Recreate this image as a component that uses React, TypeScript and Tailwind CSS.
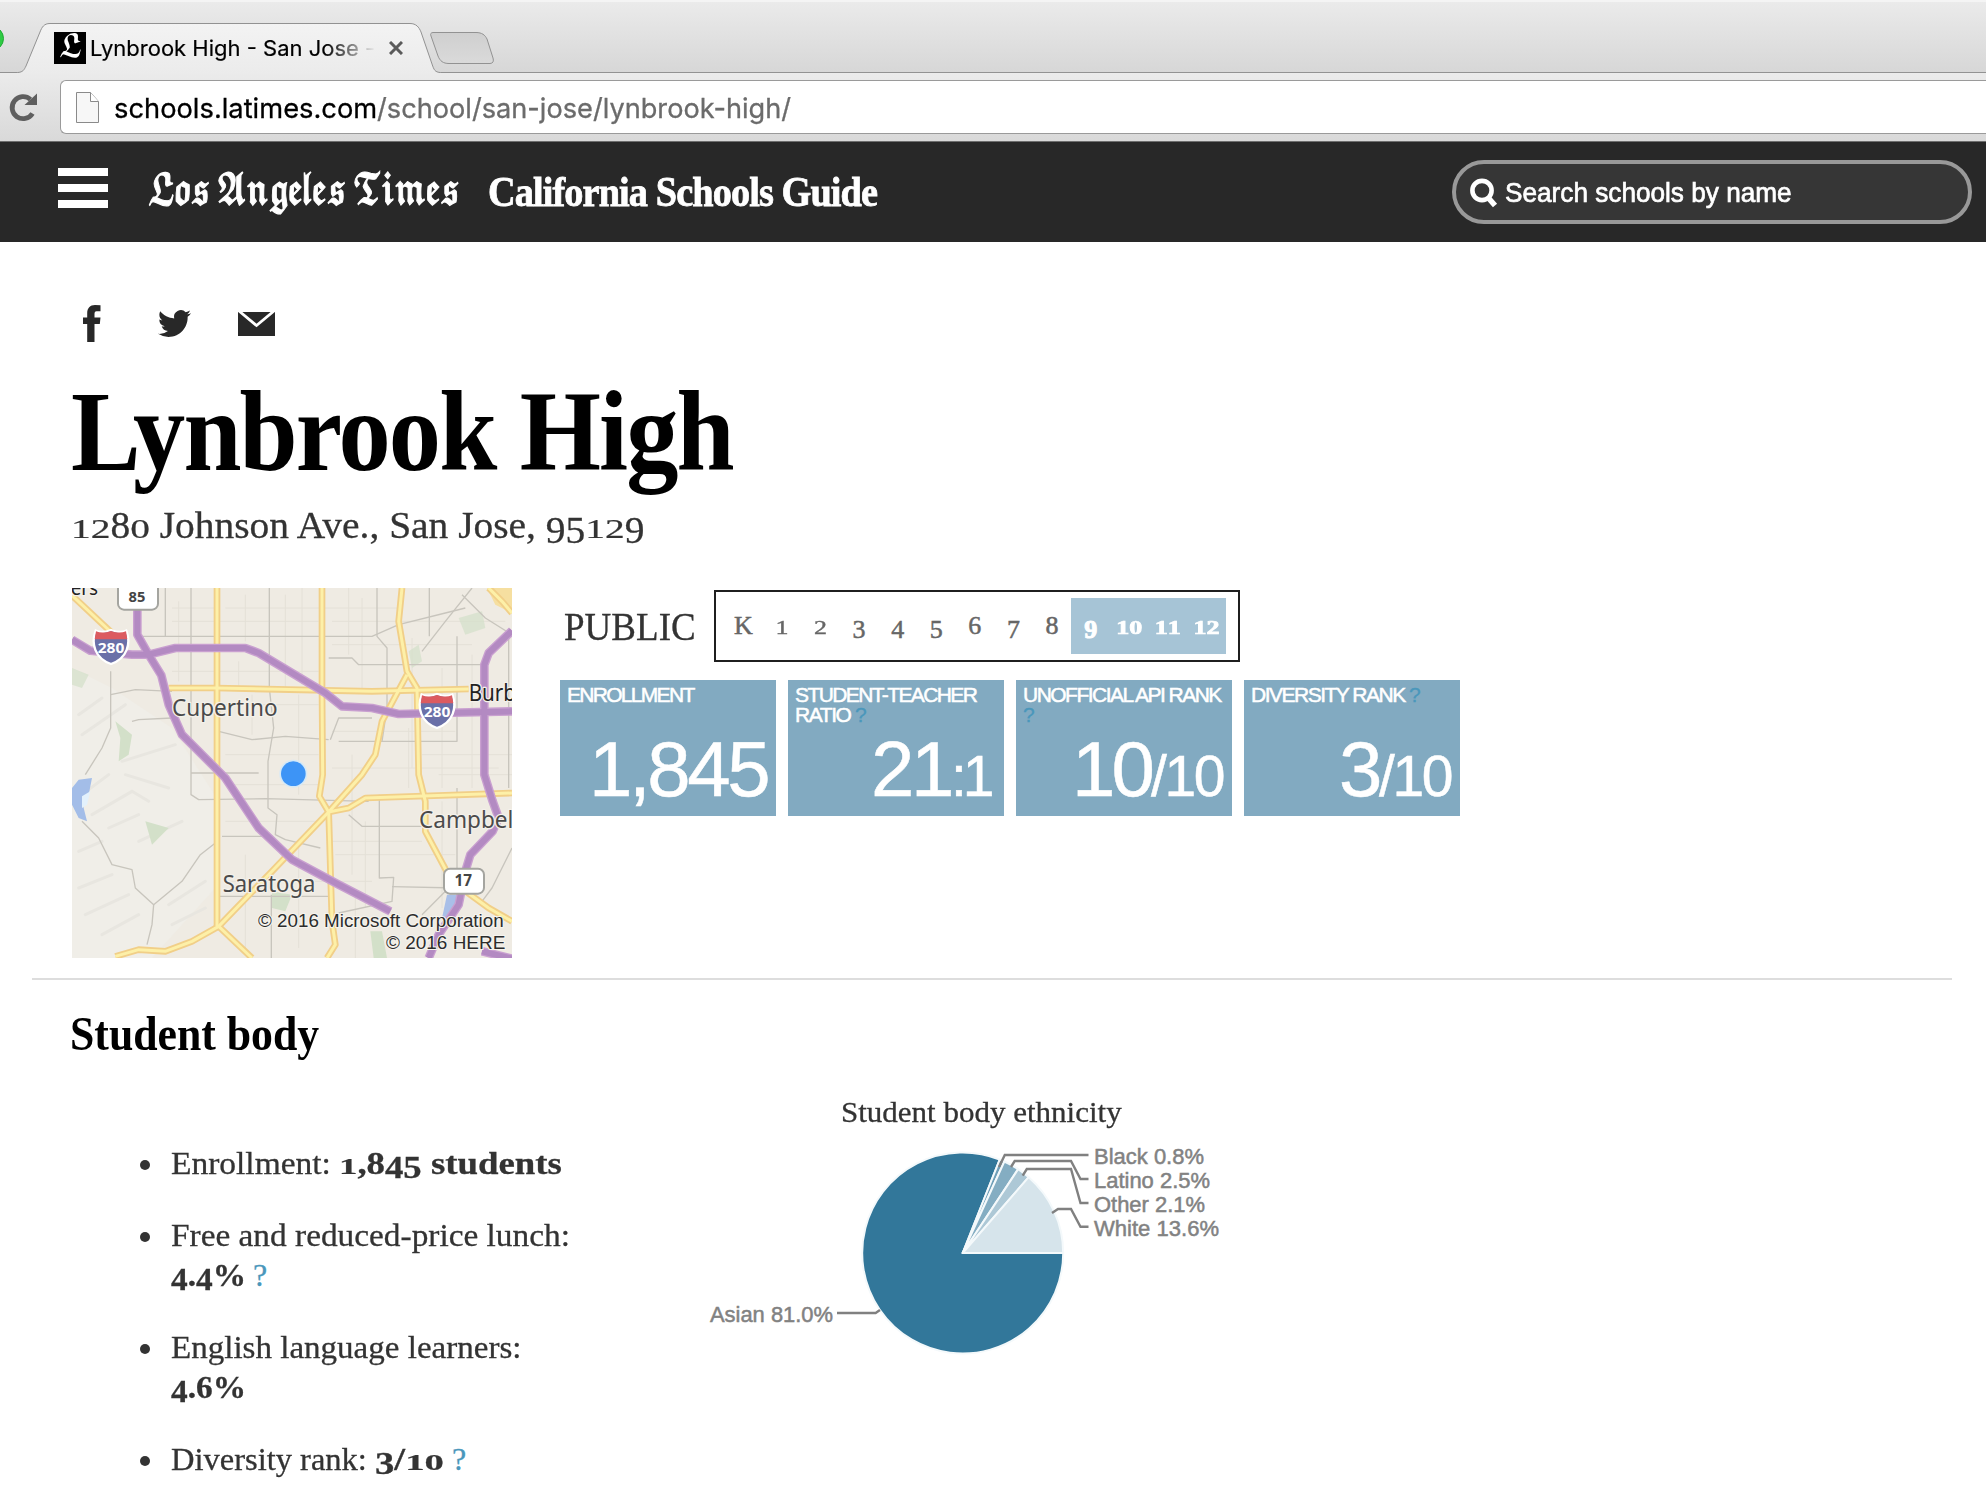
import { useLayoutEffect, useRef, useState, type ReactNode } from "react";

const SERIF = "font-['Liberation_Serif',serif]";
const SANS = "font-['Liberation_Sans',sans-serif]";

/* Sets one line of text to the width of its box, by scaling or by tracking. */
function Fit({ children, className = "", tracking = false }: { children: ReactNode; className?: string; tracking?: boolean }) {
  const box = useRef<HTMLSpanElement>(null);
  const line = useRef<HTMLSpanElement>(null);
  const [style, setStyle] = useState<Record<string, string>>({});
  useLayoutEffect(() => {
    if (!box.current || !line.current) return;
    const target = box.current.getBoundingClientRect().width;
    const natural = line.current.offsetWidth;
    const count = (line.current.textContent || "").length;
    setStyle(
      tracking
        ? { letterSpacing: `${(target - natural) / count}px` }
        : { transform: `scaleX(${target / natural})` }
    );
  }, [tracking]);
  return (
    <span ref={box} className={`inline-block whitespace-nowrap ${className}`}>
      <span ref={line} className="inline-block origin-left" style={style}>
        {children}
      </span>
    </span>
  );
}

/* Old-style figures: 0, 1 and 2 at x-height; 3, 4, 5, 7 and 9 below the baseline. */
function Figures({ children }: { children: string }) {
  return (
    <>
      {children.split("").map((c, i) => {
        if ("012".includes(c))
          return (
            <span key={i} className="inline-block origin-[50%_83.75%] scale-y-[0.72] leading-none">
              {c}
            </span>
          );
        if ("34579".includes(c))
          return (
            <span key={i} className="align-[-0.14em] leading-none">
              {c}
            </span>
          );
        return c;
      })}
    </>
  );
}

function BrowserChrome() {
  return (
    <div className="h-[142px] border-b border-[#6e6e6e] bg-[#e4e4e4] font-[Inter,sans-serif]">
      <div className="relative flex h-[73px] border-b border-[#929292] bg-linear-to-b from-[#ebebeb] to-[#d7d7d7]">
        <div className="absolute top-0 h-[2px] w-full bg-[#f4f4f4]" />
        <div className="absolute -left-[21px] top-[26px] h-[25px] w-[25px] rounded-full border border-[#1faa32] bg-[#2fcb44]" />
        <svg className="absolute left-0 top-0" width="510" height="74" viewBox="0 0 510 74" fill="none">
          <defs>
            <linearGradient id="tab" x1="0" y1="0" x2="0" y2="1">
              <stop offset="0" stopColor="#f3f3f3" />
              <stop offset="1" stopColor="#ebebeb" />
            </linearGradient>
            <linearGradient id="plus" x1="0" y1="0" x2="0" y2="1">
              <stop offset="0" stopColor="#cfcfcf" />
              <stop offset="1" stopColor="#dadada" />
            </linearGradient>
          </defs>
          <path
            d="M16 74 L18 72.5 C23 72 24 70 26 66 L40 32 C42 27 44 23.500 50 23.500 H410 C416 23.500 419 27 421 32 L432 64 C434 70 435 72 440 72.500 L442 74 Z"
            fill="url(#tab)"
          />
          <path
            d="M18 72.500 C23 72 24 70 26 66 L40 32 C42 27 44 23.500 50 23.500 H410 C416 23.500 419 27 421 32 L432 64 C434 70 435 72 440 72.500"
            stroke="#929292"
          />
          <path
            d="M433 32.500 H476 C482 32.500 485 35 487 39 L493 58 C494 61 493 63.500 490 63.500 H449 C443 63.500 440 61 438 56 L431 36 C430 34 431 32.500 433 32.500 Z"
            fill="url(#plus)"
            stroke="#929292"
          />
        </svg>
        <div className="relative ml-[54px] mt-8 flex h-8">
          <div className="flex size-8 items-center justify-center bg-black text-[29px] leading-none text-white font-['DejaVu_Math_TeX_Gyre','DejaVu_Sans',serif]">
            <span className="scale-x-[0.85]">𝕷</span>
          </div>
          <div className="ml-1 w-[286px] overflow-hidden text-[22px] leading-8 text-black [-webkit-text-stroke:0.2px_black] [mask-image:linear-gradient(to_right,black_82%,transparent_100%)]">
            <Fit className="w-[285px]">Lynbrook High - San Jose -</Fit>
          </div>
          <svg className="ml-[13px] mt-[9px]" width="14" height="14" viewBox="0 0 14 14" stroke="#5a5a5a" strokeWidth="3">
            <path d="M1 1 L13 13 M13 1 L1 13" />
          </svg>
        </div>
      </div>
      <div className="flex h-[68px] bg-linear-to-b from-[#ebebeb] to-[#d9d9d9]">
        <svg className="ml-[9px] mt-[19px]" width="30" height="30" viewBox="0 0 30 30" fill="none">
          <path d="M23.500 21.500 A11 11 0 1 1 21.500 7.500" stroke="#5f5f5f" strokeWidth="4.800" />
          <path d="M28 1.500 V13 H15.500 Z" fill="#5f5f5f" />
        </svg>
        <div className="ml-[21px] mt-[7px] flex h-[54px] flex-1 rounded-l-[6px] border border-r-0 border-[#9a9a9a] bg-white">
          <svg className="ml-[15px] mt-[11px]" width="23" height="31" viewBox="0 0 23 31" fill="#f7f7f7" stroke="#8a8a8a">
            <path d="M.5 .5 H14.500 L22.500 9.500 V30.500 H.5 Z" />
            <path d="M14.500 .5 V9.500 H22.500" fill="#fff" />
          </svg>
          <div className="ml-[15px] flex text-[27.500px] leading-[55px]">
            <Fit className="w-[263px] text-black [-webkit-text-stroke:0.3px_black]">schools.latimes.com</Fit>
            <Fit className="w-[414px] text-[#6b6b6b] [-webkit-text-stroke:0.3px_#6b6b6b]">/school/san-jose/lynbrook-high/</Fit>
          </div>
        </div>
      </div>
    </div>
  );
}

function SiteHeader() {
  return (
    <header className="flex h-[100px] bg-[#282828] text-white">
      <div className="ml-[58px] mt-[26px] flex h-10 w-[50px] flex-col justify-between">
        <div className="h-2 bg-white" />
        <div className="h-2 bg-white" />
        <div className="h-2 bg-white" />
      </div>
      <Fit className="ml-[39px] mt-[21px] w-[312px] text-[41px] leading-[60px] tracking-[-2.500px] [-webkit-text-stroke:1.2px_white] font-['DejaVu_Math_TeX_Gyre','DejaVu_Sans',serif]">
        𝕷𝖔𝖘 𝕬𝖓𝖌𝖊𝖑𝖊𝖘 𝕿𝖎𝖒𝖊𝖘
      </Fit>
      <Fit className={`ml-[29px] mt-5 w-[389px] text-[43px] font-bold leading-[60px] tracking-[-1px] [-webkit-text-stroke:0.8px_white] ${SERIF}`}>
        California Schools Guide
      </Fit>
      <div className="ml-auto mr-[14px] mt-[18px] flex h-16 w-[520px] items-center rounded-full border-4 border-[#999] bg-[#363636]">
        <svg className="ml-[14px] mt-px" width="28" height="30" viewBox="0 0 28 30" fill="none" stroke="#fff">
          <circle cx="12" cy="12.500" r="9.600" strokeWidth="4.600" />
          <path d="M18 19.500 L25 27.500" strokeWidth="5.500" />
        </svg>
        <Fit className={`ml-[7px] mt-[2px] w-[287px] text-[28px] leading-[50px] [-webkit-text-stroke:0.7px_white] ${SANS}`}>
          Search schools by name
        </Fit>
      </div>
    </header>
  );
}

function ShareIcons() {
  return (
    <div className="flex h-[37px] items-center text-[#282828]">
      <svg className="ml-[11px]" width="18" height="37" viewBox="0 0 18 37" fill="currentColor">
        <path d="M17.500 .2 V6.200 H13.500 C12 6.200 11.500 7.500 11.500 9 V12.500 H17.500 L16.800 19 H11.500 V37 H4.200 V19 H0 V12.500 H4.200 V8.500 C4.200 3 7 0 12 0 Z" />
      </svg>
      <svg className="ml-[57px]" width="33" height="33" viewBox="0 0 24 24" fill="currentColor">
        <path d="M23.953 4.570a10 10 0 01-2.825.775 4.958 4.958 0 002.163-2.723c-.951.555-2.005.959-3.127 1.184a4.920 4.920 0 00-8.384 4.482C7.690 8.095 4.067 6.130 1.640 3.162a4.822 4.822 0 00-.666 2.475c0 1.710.870 3.213 2.188 4.096a4.904 4.904 0 01-2.228-.616v.060a4.923 4.923 0 003.946 4.827 4.996 4.996 0 01-2.212.085 4.936 4.936 0 004.604 3.417 9.867 9.867 0 01-6.102 2.105c-.390 0-.779-.023-1.170-.067a13.995 13.995 0 007.557 2.209c9.053 0 13.998-7.496 13.998-13.985 0-.210 0-.420-.015-.630A9.935 9.935 0 0024 4.590z" />
      </svg>
      <svg className="ml-[47px]" width="37" height="24" viewBox="0 0 37 24" fill="currentColor">
        <path d="M0 0 H37 V24 H0 Z" />
        <path d="M1 -1 L18.500 13.500 L36 -1" fill="none" stroke="#fff" strokeWidth="2.800" />
      </svg>
    </div>
  );
}

function Shield({ x, y }: { x: number; y: number }) {
  return (
    <g transform={`translate(${x} ${y})`}>
      <path d="M-46 -48 C-30 -40 -16 -44 0 -50 C16 -44 30 -40 46 -48 C60 -10 50 34 0 52 C-50 34 -60 -10 -46 -48Z" fill="#6a70a8" stroke="#fff" strokeWidth="7" />
      <path d="M-45 -46 C-30 -40 -16 -42 0 -47 C16 -42 30 -40 45 -46 L49 -22 H-49Z" fill="#dc5b60" />
      <text x="0" y="20" textAnchor="middle" fontSize="43" fontWeight="700" fill="#fff" textLength="80" lengthAdjust="spacingAndGlyphs">
        280
      </text>
    </g>
  );
}

const MAIN_ROADS = [
  "M435 0V1015", "M750 0V300L752 560L742 625L770 672L780 1000L790 1070L765 1110",
  "M990 0L980 100L1005 250L1035 300L1040 560L1060 640L1060 730L1140 880L1250 960L1320 1000",
  "M290 300H430L900 310L1190 303", "M1005 260L930 400L910 500L870 560L770 672L600 850L440 1015L360 1060L280 1090L200 1085L130 1105",
  "M440 1015L540 1110", "M770 672L830 660L880 630L1320 615", "M0 22L120 135", "M1250 0L1290 40L1320 75",
];
const MINOR_ROADS = [
  "M280 0V145", "M357 0V620L380 635L580 632L890 640", "M592 0V300L605 420L588 520V660L615 680L610 740L640 755L745 780", "M1072 0V145M915 0V145L945 180V360L930 460",
  "M190 145H900L980 110L1120 75L1180 60", "M770 210H840L860 230H1240", "M1155 145V460H800M775 455L800 390H900", "M116 250V420L90 480L40 560",
  "M116 320L190 305L300 310", "M180 400L200 395L300 390M440 430L540 455L640 445L770 455", "M357 555H560", "M450 745H590M922 620V870L965 868L960 940L800 975",
  "M1155 600V900L960 896", "M30 700L80 750L120 830L180 845L190 900L245 950L330 880L385 800L430 765", "M245 950L240 1010L225 1070", "M598 920V1110M440 925H780",
  "M1320 780L1260 900L1230 940M1130 900L1050 980", "M830 680L870 715H1050", "M1050 190L1120 100L1200 0M1170 20L1240 90L1320 140", "M1310 120V600",
];
const HIGHWAYS = [
  "M0 155L55 188L180 200L230 200L310 180H520L560 195L760 315L810 355L900 360L980 378L1320 370",
  "M196 60V140L230 200L268 262L290 350L330 440L460 570L560 720L660 815L800 890L955 970",
  "M1320 128L1250 195L1237 230V560L1262 640L1280 690L1262 730L1195 800L1180 850L1160 950L1100 1040L1070 1110",
  "M1230 1090L1320 1112",
];

function SchoolMap() {
  return (
    <svg className="h-[370px] w-[440px] shrink-0" viewBox="0 0 1320 1110" fill="none" fontFamily="'Noto Sans', sans-serif">
      <rect width="1320" height="1110" fill="#efebe3" />
      <path d="M0 240L120 300L300 420L440 640L430 900L240 1110H0Z" fill="#f0eee8" />
      <g stroke="#e4e0d7" strokeWidth="3">
        <path d="M320 40V280M520 20V160M640 20V300M690 0V290M830 0V200M870 30V300M1020 150V540M1110 240V600M1200 200V600M500 220V300M540 320V440M680 320V620M840 500V860M1010 420V600M1110 640V960M680 760V1080M880 700V960M520 800V1100M850 920V1110" />
        <path d="M300 60H440M300 100H740M460 60H980M300 250H740M780 100H1300M780 170H1200M460 350H740M460 500H740M780 430H1150M780 540H1280M460 590H740M460 700H740M780 760H1050M460 880H900M790 800H1150M1100 560H1320M1050 500H1320" />
      </g>
      <g stroke="#e8e6e0" strokeWidth="9" strokeLinecap="round">
        <path d="M20 380L90 330M30 440L160 350M150 520L310 470M60 680L180 610L230 640M160 560L290 600M110 720L200 680M20 790L90 760M20 900L120 860M40 980L170 920M90 1040L200 980M290 950L400 880M300 1010L400 960M200 760L330 700M30 620L110 560" />
      </g>
      <g fill="#d3e0c9">
        <path d="M130 400L180 440L170 500L140 520L145 450Z" />
        <path d="M220 700L290 720L240 770Z" />
        <path d="M1160 90L1230 70L1240 120L1180 140Z" opacity=".7" />
        <path d="M600 910L660 920L640 970L600 960ZM895 1030L930 1030L945 1110H905Z" />
        <path d="M0 240L50 260L30 300L0 290ZM1010 190L1040 170L1050 220L1020 240Z" opacity=".7" />
      </g>
      <path d="M20 575L60 570L50 620L30 640L45 700L20 690L0 650V600Z" fill="#a3bde8" />
      <path d="M30 625L55 610L45 650L30 660Z" fill="#e3f1fc" />
      <path d="M1125 920L1165 920L1150 980L1110 990Z" fill="#a9bfe8" />
      <path d="M1245 0H1320V75L1270 50Z" fill="#f6dfa0" />
      <g stroke="#c8c5bd" strokeWidth="4" strokeLinejoin="round">
        {MINOR_ROADS.map((d) => <path key={d} d={d} />)}
      </g>
      <g strokeLinejoin="round">
        <g stroke="#f1cf88" strokeWidth="20">{MAIN_ROADS.map((d) => <path key={d} d={d} />)}</g>
        <g stroke="#fdf0a8" strokeWidth="9">{MAIN_ROADS.map((d) => <path key={d} d={d} />)}</g>
        <g stroke="#c9a0d0" strokeWidth="26">{HIGHWAYS.map((d) => <path key={d} d={d} />)}</g>
        <g stroke="#b38ac2" strokeWidth="18">{HIGHWAYS.map((d) => <path key={d} d={d} />)}</g>
      </g>
      <circle cx="664" cy="557" r="42" fill="#d5e9f7" />
      <circle cx="664" cy="557" r="37" fill="#3d94f6" />
      <rect x="138" y="-30" width="120" height="95" rx="18" fill="#fff" stroke="#a5a5a0" strokeWidth="6" />
      <text x="195" y="41" textAnchor="middle" fontSize="44" fontWeight="700" fill="#444">85</text>
      <rect x="1116" y="842" width="120" height="75" rx="18" fill="#fff" stroke="#a5a5a0" strokeWidth="6" />
      <text x="1174" y="894" textAnchor="middle" fontSize="46" fontWeight="700" fill="#444">17</text>
      <Shield x={117} y={176} />
      <Shield x={1095} y={368} />
      <g fontSize="69" fill="#4a4a4a" stroke="#f4f1ea" strokeWidth="8" paintOrder="stroke" strokeLinejoin="round">
        <text x="300" y="384" textLength="317" lengthAdjust="spacingAndGlyphs">Cupertino</text>
        <text x="452" y="911" textLength="278" lengthAdjust="spacingAndGlyphs">Saratoga</text>
        <text x="1041" y="720" textLength="283" lengthAdjust="spacingAndGlyphs">Campbel</text>
        <text x="1190" y="338" fill="#222" textLength="142" lengthAdjust="spacingAndGlyphs">Burb</text>
        <text x="-4" y="22" fontSize="58" fill="#222" textLength="82" lengthAdjust="spacingAndGlyphs">ers</text>
      </g>
      <g fontSize="54" fill="#2c2c2c" stroke="#f6f4ee" strokeWidth="6" paintOrder="stroke" fontFamily="'Liberation Sans', sans-serif">
        <text x="558" y="1018" textLength="737" lengthAdjust="spacingAndGlyphs">© 2016 Microsoft Corporation</text>
        <text x="942" y="1084" textLength="358" lengthAdjust="spacingAndGlyphs">© 2016 HERE</text>
      </g>
    </svg>
  );
}

const GRADES = ["K", "1", "2", "3", "4", "5", "6", "7", "8", "9", "10", "11", "12"];

function GradeStrip() {
  return (
    <div className={`flex h-[72px] ${SERIF}`}>
      <Fit className="ml-1 w-[132px] text-[39px] leading-[74px] text-[#333] [-webkit-text-stroke:0.3px_#333]">PUBLIC</Fit>
      <div className="ml-[18px] flex w-[526px] border-2 border-[#1f1f1f] pl-[8px] pt-[6px]">
        {GRADES.map((g, i) => (
          <div
            key={g}
            className={
              i < 9
                ? "h-14 w-[38.600px] text-center text-[26px] leading-[56px] text-[#666] [-webkit-text-stroke:0.5px_#666]"
                : "h-14 w-[38.600px] bg-[#a6c4d6] text-center text-[26px] font-bold leading-[56px] text-white [-webkit-text-stroke:1px_white]"
            }
          >
            <Figures>{g}</Figures>
          </div>
        ))}
      </div>
    </div>
  );
}

function Help() {
  return <span className="text-[#4a97bb] [-webkit-text-stroke:0.3px_#4a97bb]">?</span>;
}

function StatCard({ label, children }: { label: ReactNode; children: ReactNode }) {
  return (
    <div className={`flex h-[136px] w-[216px] flex-col justify-between bg-[#82aac1] pt-[5px] text-white ${SANS}`}>
      <div className="flex h-10 flex-col items-start pl-[7px] text-[21px] leading-5 [-webkit-text-stroke:0.5px_white]">{label}</div>
      <div className="flex items-baseline justify-end pb-[7px] pr-[9px] text-[78px] leading-20 [-webkit-text-stroke:0.5px_white]">{children}</div>
    </div>
  );
}

function Stats() {
  return (
    <div className="mt-[18px] flex gap-3">
      <StatCard label={<Fit tracking className="w-[127px]">ENROLLMENT</Fit>}>
        <Fit tracking className="w-[178px]">1,845</Fit>
      </StatCard>
      <StatCard
        label={
          <>
            <Fit tracking className="w-[181px]">STUDENT-TEACHER</Fit>
            <Fit tracking className="w-[70px]">RATIO <Help /></Fit>
          </>
        }
      >
        <Fit tracking className="w-[80px]">21</Fit>
        <Fit tracking className="mr-[4px] w-[40px] text-[57px] leading-none">:1</Fit>
      </StatCard>
      <StatCard
        label={
          <>
            <Fit tracking className="w-[198px]">UNOFFICIAL API RANK</Fit>
            <Help />
          </>
        }
      >
        <Fit tracking className="w-[79px]">10</Fit>
        <Fit tracking className="w-[72px] text-[57px] leading-none">/10</Fit>
      </StatCard>
      <StatCard label={<Fit tracking className="w-[168px]">DIVERSITY RANK <Help /></Fit>}>
        <Fit tracking className="w-[40px]">3</Fit>
        <Fit tracking className="w-[72px] text-[57px] leading-none">/10</Fit>
      </StatCard>
    </div>
  );
}

function Bullet({ children }: { children: ReactNode }) {
  return (
    <li className="flex">
      <span className="mr-[21px] mt-[17px] size-[10px] rounded-full bg-[#333]" />
      <div>{children}</div>
    </li>
  );
}

function StudentFacts() {
  return (
    <ul className="mt-[79px] flex flex-col gap-8 pl-[68px] text-[32px] leading-10 text-[#333] [-webkit-text-stroke:0.3px]">
      <Bullet>
        <div className="flex h-10">
          <Fit className="w-[160px]">Enrollment:</Fit>
          <Fit className="ml-[8px] w-[223px] font-bold"><Figures>1,845</Figures> students</Fit>
        </div>
      </Bullet>
      <Bullet>
        <div className="h-10"><Fit className="w-[399px]">Free and reduced-price lunch:</Fit></div>
        <div className="flex h-10">
          <Fit className="w-[75px] font-bold"><Figures>4.4</Figures>%</Fit>
          <span className="ml-[7px] text-[#4a97bb]">?</span>
        </div>
      </Bullet>
      <Bullet>
        <div className="h-10"><Fit className="w-[350px]">English language learners:</Fit></div>
        <div className="h-10"><Fit className="w-[75px] font-bold"><Figures>4.6</Figures>%</Fit></div>
      </Bullet>
      <Bullet>
        <div className="flex h-10">
          <Fit className="w-[196px]">Diversity rank:</Fit>
          <Fit className="ml-[8px] w-[69px] font-bold"><Figures>3/10</Figures></Fit>
          <span className="ml-[8px] text-[#4a97bb]">?</span>
        </div>
      </Bullet>
    </ul>
  );
}

const SLICES = [
  { share: 81.0, fill: "#32779a" },
  { share: 0.8, fill: "#6f9fb8" },
  { share: 2.5, fill: "#84adc2" },
  { share: 2.1, fill: "#adc8d6" },
  { share: 13.6, fill: "#d6e4eb" },
];

function slicePath(from: number, to: number) {
  const a = from * 2 * Math.PI;
  const b = to * 2 * Math.PI;
  const r = 100.5;
  return `M0 0L${r * Math.cos(a)} ${r * Math.sin(a)}A${r} ${r} 0 ${to - from > 0.5 ? 1 : 0} 1 ${r * Math.cos(b)} ${r * Math.sin(b)}Z`;
}

function EthnicityChart() {
  let total = 0;
  return (
    <div className="w-[540px]">
      <Fit className="ml-[141px] w-[281px] text-[30px] leading-10 text-[#333] [-webkit-text-stroke:0.3px_#333]">Student body ethnicity</Fit>
      <svg className="h-[230px] w-[540px]" viewBox="700 1132 540 230" fill="none" fontFamily="'Liberation Sans', sans-serif">
        <g transform="translate(962.700 1253)" stroke="#f4f9fb" strokeWidth="2" strokeLinejoin="round">
          {SLICES.map((s) => {
            const from = total / 100;
            total += s.share;
            return <path key={s.fill} d={slicePath(from, total / 100)} fill={s.fill} />;
          })}
        </g>
        <g stroke="#808080" strokeWidth="2.400">
          <path d="M999 1167L1004.800 1155H1088.500" />
          <path d="M1011 1167L1014.700 1161H1071L1080.500 1179H1088.500" />
          <path d="M1022.700 1175.700L1026.800 1169H1071L1080.500 1203H1088.500" />
          <path d="M1052 1213L1058 1209H1071L1080.500 1226.700H1088.500" />
          <path d="M837 1313H875.600L880 1310" />
        </g>
        <g fontSize="22" fill="#828282" stroke="#828282" strokeWidth=".5">
          <text x="1094" y="1163.500" textLength="110" lengthAdjust="spacingAndGlyphs">Black 0.8%</text>
          <text x="1094" y="1187.500" textLength="116" lengthAdjust="spacingAndGlyphs">Latino 2.5%</text>
          <text x="1094" y="1211.500" textLength="111" lengthAdjust="spacingAndGlyphs">Other 2.1%</text>
          <text x="1094" y="1235.500" textLength="125" lengthAdjust="spacingAndGlyphs">White 13.6%</text>
          <text x="710" y="1321.500" textLength="123" lengthAdjust="spacingAndGlyphs">Asian 81.0%</text>
        </g>
      </svg>
    </div>
  );
}

export default function App() {
  return (
    <div className="h-[1508px] w-[1986px] overflow-hidden bg-white">
      <BrowserChrome />
      <SiteHeader />
      <main className={`pl-[72px] pt-[63px] ${SERIF}`}>
        <ShareIcons />
        <h1 className="-ml-px mt-[30px] h-[120px] text-[114px] font-bold leading-[120px] tracking-[-2px] text-black">
          <Fit className="w-[662px]">Lynbrook High</Fit>
        </h1>
        <div className="-ml-px mt-[9px] h-12 text-[38px] leading-[48px] text-[#333] [-webkit-text-stroke:0.3px_#333]">
          <Fit className="w-[573px]">
            <Figures>1280</Figures> Johnson Ave., San Jose, <Figures>95129</Figures>
          </Fit>
        </div>
        <div className="mt-[39px] flex gap-12">
          <SchoolMap />
          <div className="pt-[2px]">
            <GradeStrip />
            <Stats />
          </div>
        </div>
        <div className="-ml-10 mt-5 h-[2px] w-[1920px] bg-[#dddddd]" />
        <div className="flex">
          <section className="w-[628px] pt-[24px]">
            <h2 className="-ml-0.5 h-[60px] text-[49px] font-bold leading-[60px] text-black">
              <Fit className="w-[249px]">Student body</Fit>
            </h2>
            <StudentFacts />
          </section>
          <section className="pt-[112px]">
            <EthnicityChart />
          </section>
        </div>
      </main>
    </div>
  );
}
